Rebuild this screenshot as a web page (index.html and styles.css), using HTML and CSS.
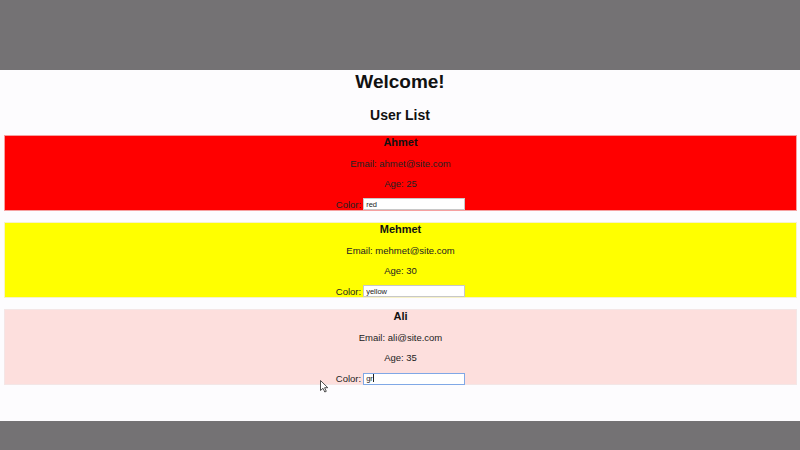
FILE: index.html
```html
<!DOCTYPE html>
<html lang="en">
<head>
<meta charset="utf-8">
<title>Welcome!</title>
<link rel="stylesheet" href="styles.css">
</head>
<body>
<main class="page">
  <h1 class="title">Welcome!</h1>
  <h2 class="subtitle">User List</h2>
  <section class="user-list">
    <article class="user-card card-red">
      <h3 class="user-name">Ahmet</h3>
      <p class="user-line">Email: ahmet@site.com</p>
      <p class="user-line">Age: 25</p>
      <div class="color-row"><label class="color-label">Color:</label><input class="color-input" type="text" value="red"></div>
    </article>
    <article class="user-card card-yellow">
      <h3 class="user-name">Mehmet</h3>
      <p class="user-line">Email: mehmet@site.com</p>
      <p class="user-line">Age: 30</p>
      <div class="color-row"><label class="color-label">Color:</label><input class="color-input" type="text" value="yellow"></div>
    </article>
    <article class="user-card card-pink">
      <h3 class="user-name">Ali</h3>
      <p class="user-line">Email: ali@site.com</p>
      <p class="user-line">Age: 35</p>
      <div class="color-row"><label class="color-label">Color:</label><span class="input-wrap"><input class="color-input is-focused" type="text" value="gr"><span class="caret"></span></span></div>
    </article>
  </section>
</main>
<svg class="mouse-cursor" width="9" height="13" viewBox="0 0 9 13" aria-hidden="true">
  <path d="M0.5 0.5 L0.5 10.5 L3 8.3 L4.8 12 L6.3 11.3 L4.6 7.7 L7.8 7.7 Z" fill="#ffffff" stroke="#3a3a3a" stroke-width="0.9" stroke-linejoin="round"/>
</svg>
</body>
</html>
```
FILE: styles.css
```css
html, body {
  margin: 0;
  padding: 0;
}
body {
  background: #747274;
  font-family: "Liberation Sans", Arial, sans-serif;
  color: #1a1a1a;
  height: 450px;
  overflow: hidden;
  position: relative;
}
.page {
  margin-top: 70px;
  height: 351px;
  background: #fdfcfe;
  padding-top: 1px;
  box-sizing: border-box;
}
.title {
  margin: 0;
  font-size: 19px;
  line-height: 22px;
  font-weight: bold;
  text-align: center;
  color: #111;
}
.subtitle {
  margin: 14px 0 0;
  font-size: 14px;
  line-height: 16px;
  font-weight: bold;
  text-align: center;
  color: #111;
}
.user-list {
  margin: 12px 3px 0 4px;
  display: flex;
  flex-direction: column;
  gap: 11px;
}
.user-card {
  border: 1px solid #e3dcdc;
  text-align: center;
  height: 76px;
  box-sizing: border-box;
}
.card-red { background: #ff0000; border-color: #f6a0a0; }
.card-yellow { background: #ffff00; border-color: #f7f2c8; }
.card-pink { background: #fddfdd; border-color: #f4e6e6; }
.user-name {
  margin: 0 0 9px;
  font-size: 11px;
  line-height: 13px;
  font-weight: bold;
  color: #111;
}
.user-line {
  margin: 0 0 9px;
  font-size: 9.5px;
  line-height: 11px;
  color: #222;
}
.color-row {
  display: flex;
  justify-content: center;
  align-items: center;
  gap: 2px;
  height: 12px;
  font-size: 9.5px;
  color: #222;
}
.color-label {
  line-height: 11px;
}
.input-wrap {
  position: relative;
  display: inline-block;
  height: 12px;
}
.color-input {
  box-sizing: border-box;
  width: 102px;
  height: 12px;
  margin: 0;
  padding: 0 2px;
  border: 1px solid #c8c8c8;
  background: #ffffff;
  font-family: "Liberation Sans", Arial, sans-serif;
  font-size: 7.5px;
  line-height: 10px;
  color: #222;
  outline: none;
}
.color-input.is-focused {
  border-color: #80a8e6;
}
.caret {
  position: absolute;
  left: 10px;
  top: 2px;
  width: 1px;
  height: 8px;
  background: #222;
}
.mouse-cursor {
  position: absolute;
  left: 320px;
  top: 380px;
}
```
